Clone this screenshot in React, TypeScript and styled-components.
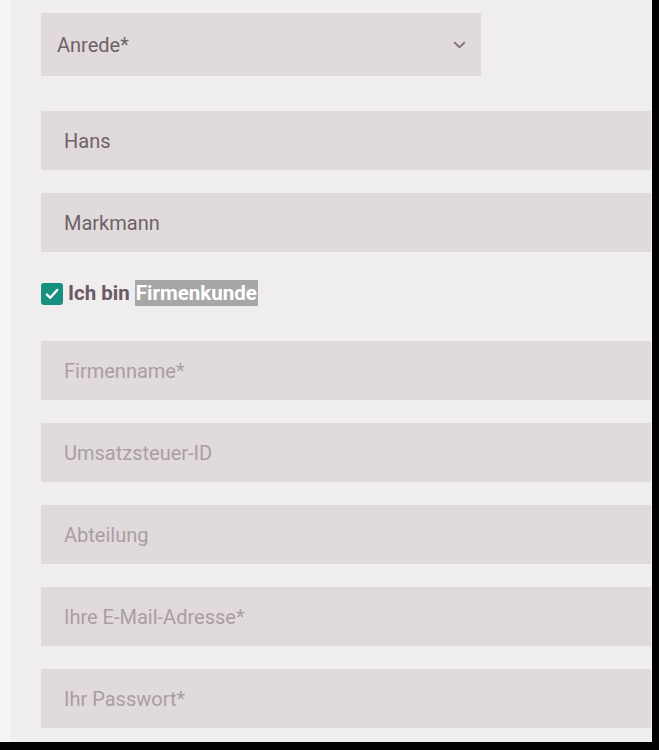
import React from "react";
import styled, { createGlobalStyle } from "styled-components";

const Global = createGlobalStyle`
  html, body { margin: 0; padding: 0; background: #000; }
  * { box-sizing: border-box; }
`;

const Screen = styled.div`
  width: 659px;
  height: 750px;
  background: #000;
  display: flex;
  align-items: flex-start;
  overflow: hidden;
`;

const Panel = styled.div`
  width: 652px;
  height: 742px;
  display: flex;
  background: #efedee;
`;

const Strip = styled.div`
  width: 11px;
  flex: none;
  background: #f5f4f5;
`;

const Form = styled.form`
  flex: 1;
  display: flex;
  flex-direction: column;
  padding: 13px 1px 0 30px;
  font-family: Roboto, "Noto Sans", sans-serif;
`;

const Field = styled.div<{ $width?: number; $mt?: number }>`
  height: 59px;
  width: ${(p) => (p.$width ? `${p.$width}px` : "100%")};
  margin-top: ${(p) => p.$mt ?? 23}px;
  background: #e1dadc;
  display: flex;
  align-items: center;
  justify-content: space-between;
  padding: 0 20px 0 23px;
  flex: none;
`;

const SelectBox = styled(Field)`
  height: 63px;
  padding: 0 15px 0 16px;
`;

const Value = styled.span<{ $placeholder?: boolean }>`
  font-size: 20px;
  line-height: 24px;
  color: ${(p) => (p.$placeholder ? "#a99ea3" : "#6d6267")};
`;

const CheckRow = styled.label`
  display: flex;
  align-items: center;
  gap: 5px;
  margin-top: 29px;
  height: 25px;
  line-height: 25px;
  font-size: 20.5px;
  font-weight: 700;
  color: #6b5a62;
  flex: none;
`;

const Box = styled.span`
  width: 22px;
  height: 22px;
  border-radius: 3px;
  background: #17907f;
  display: flex;
  align-items: center;
  justify-content: center;
  flex: none;
`;

const Highlight = styled.span`
  background: #a8a7a8;
  color: #fff;
  padding: 1px 1px 1px 1px;
`;

const Chevron = () => (
  <svg width="13" height="8" viewBox="0 0 13 8" fill="none">
    <path d="M1.2 1.2 L6.5 6.3 L11.8 1.2" stroke="#786d72" strokeWidth="1.8" />
  </svg>
);

const Check = () => (
  <svg width="14" height="12" viewBox="0 0 14 12" fill="none">
    <path d="M1.8 6.5 L5.3 9.8 L12.2 2" stroke="#fff" strokeWidth="2.4" strokeLinecap="round" strokeLinejoin="round" />
  </svg>
);

export default function App() {
  return (
    <>
      <Global />
      <Screen>
        <Panel>
          <Strip />
          <Form>
            <SelectBox $width={440} $mt={0}>
              <Value>Anrede*</Value>
              <Chevron />
            </SelectBox>
            <Field $mt={35}>
              <Value>Hans</Value>
            </Field>
            <Field $mt={23}>
              <Value>Markmann</Value>
            </Field>
            <CheckRow>
              <Box>
                <Check />
              </Box>
              <span>
                Ich bin <Highlight>Firmenkunde</Highlight>
              </span>
            </CheckRow>
            <Field $mt={35}>
              <Value $placeholder>Firmenname*</Value>
            </Field>
            <Field>
              <Value $placeholder>Umsatzsteuer-ID</Value>
            </Field>
            <Field>
              <Value $placeholder>Abteilung</Value>
            </Field>
            <Field>
              <Value $placeholder>Ihre E-Mail-Adresse*</Value>
            </Field>
            <Field>
              <Value $placeholder>Ihr Passwort*</Value>
            </Field>
          </Form>
        </Panel>
      </Screen>
    </>
  );
}
